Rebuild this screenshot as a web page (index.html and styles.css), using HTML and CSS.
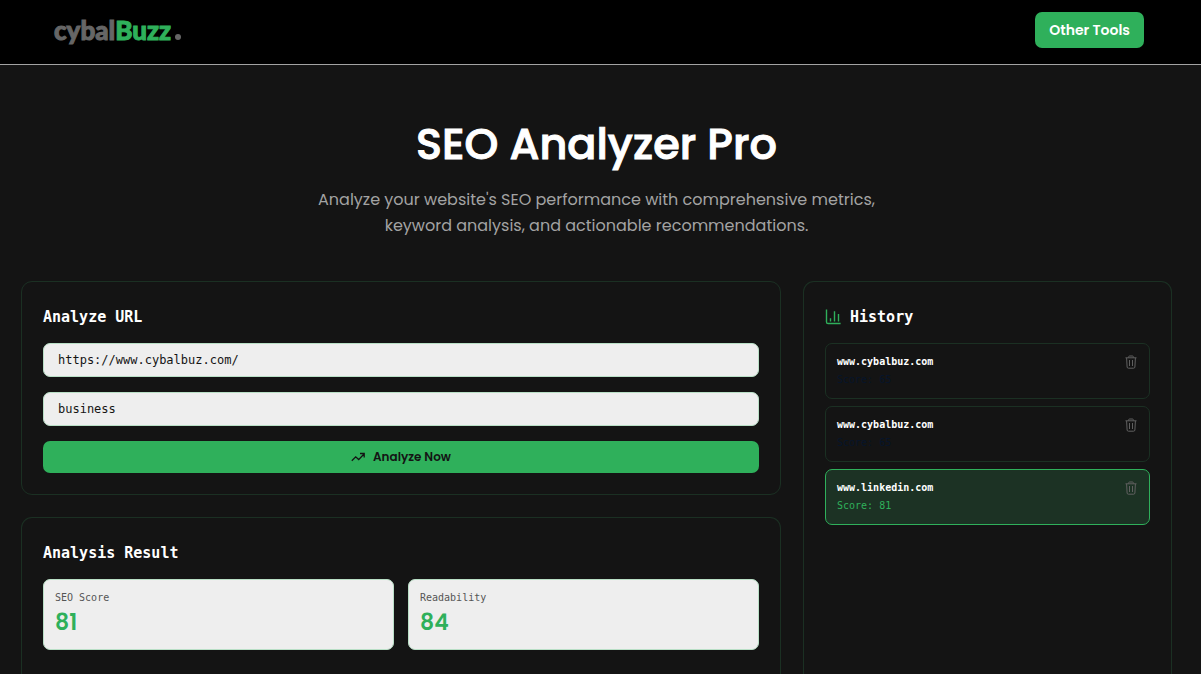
FILE: index.html
```html
<!DOCTYPE html>
<html lang="en">
<head>
<meta charset="utf-8">
<meta name="viewport" content="width=device-width, initial-scale=1">
<title>SEO Analyzer Pro</title>
<link rel="stylesheet" href="styles.css">
</head>
<body>
<svg class="sprite" aria-hidden="true">
  <symbol id="trash" viewBox="0 0 12 14"><path d="M.5 2.8h11M3.7 2.6V1.8q0-.8.8-.8h3q.8 0 .8.8v.8M1.6 3l.5 9q.1 1.2 1.3 1.2h5.2q1.2 0 1.3-1.2l.5-9M4.5 5v6M7.5 5v6"/></symbol>
</svg>
<header class="topbar">
  <a class="logo" href="#"><span class="logo-main">cybal</span><span class="logo-accent">Buzz</span><span class="logo-dot"></span></a>
  <button class="btn btn-tools" type="button">Other Tools</button>
</header>
<main class="page">
  <section class="hero">
    <h1 class="hero-title">SEO Analyzer Pro</h1>
    <p class="hero-text">Analyze your website's SEO performance with comprehensive metrics, keyword analysis, and actionable recommendations.</p>
  </section>
  <div class="layout">
    <div class="content">
      <section class="card">
        <h2 class="card-title">Analyze URL</h2>
        <form class="form">
          <input class="field" type="text" aria-label="Website URL" value="https://www.cybalbuz.com/">
          <input class="field" type="text" aria-label="Keyword" value="business">
          <button class="btn btn-analyze" type="button">
            <svg class="trend" viewBox="0 0 14 10" aria-hidden="true"><path d="M.8 8.7 4.7 4.8l3 2.8L13 2M9 1.5h4.2v4"/></svg>
            Analyze Now
          </button>
        </form>
      </section>
      <section class="card card-open">
        <h2 class="card-title">Analysis Result</h2>
        <div class="stats">
          <div class="stat"><span class="stat-label">SEO Score</span><strong class="stat-value">81</strong></div>
          <div class="stat"><span class="stat-label">Readability</span><strong class="stat-value">84</strong></div>
        </div>
      </section>
    </div>
    <aside class="card card-open">
      <h2 class="card-title">
        <svg class="chart" viewBox="0 0 16 16" aria-hidden="true"><path d="M1.5 .5v12.4q0 1.6 1.6 1.6h12.5M5.5 9.2v3.3M9.5 2.2v10.3M13.5 5v7.5"/></svg>
        History
      </h2>
      <ul class="history">
        <li class="entry"><div><p class="entry-site">www.cybalbuz.com</p><p class="entry-score">Score: 65</p></div><button class="remove" type="button" aria-label="Remove"><svg class="trash" aria-hidden="true"><use href="#trash"/></svg></button></li>
        <li class="entry"><div><p class="entry-site">www.cybalbuz.com</p><p class="entry-score">Score: 65</p></div><button class="remove" type="button" aria-label="Remove"><svg class="trash" aria-hidden="true"><use href="#trash"/></svg></button></li>
        <li class="entry entry-active"><div><p class="entry-site">www.linkedin.com</p><p class="entry-score">Score: 81</p></div><button class="remove" type="button" aria-label="Remove"><svg class="trash" aria-hidden="true"><use href="#trash"/></svg></button></li>
      </ul>
    </aside>
  </div>
</main>
</body>
</html>
```
FILE: styles.css
```css
:root {
  --green: #2fb05b;
  --line: #1b3023;
  --sans: Poppins, Inter, sans-serif;
  --mono: "DejaVu Sans Mono", monospace;
}
* { box-sizing: border-box; }
body {
  margin: 0;
  min-height: 100vh;
  display: flex;
  flex-direction: column;
  background: #141414;
  color: #fff;
  font-family: var(--mono);
}
h1, h2, p, ul { margin: 0; padding: 0; }
svg { fill: none; stroke: currentColor; flex: none; }
.sprite { position: absolute; width: 0; height: 0; }
.topbar {
  display: flex;
  align-items: flex-start;
  justify-content: space-between;
  height: 65px;
  padding: 12px 57px 0 54px;
  background: #000;
  border-bottom: 1px solid #a3a3a3;
}
.logo {
  display: flex;
  align-items: baseline;
  font: 900 26px/36px Lato, sans-serif;
  color: #666;
  text-decoration: none;
  -webkit-text-stroke: 1px currentColor;
}
.logo-accent { color: var(--green); }
.logo-dot { width: 6px; height: 6px; margin-left: 4px; border-radius: 50%; background: #666; }
.btn {
  border: 0;
  border-radius: 7px;
  background: var(--green);
  font-family: var(--sans);
}
.btn-tools { height: 36px; padding: 0 14px; color: #fff; font-size: 14px; font-weight: 600; }
.page { flex: 1; display: flex; flex-direction: column; padding: 0 29px 0 21px; }
.hero { padding: 50px 0 42px; text-align: center; }
.hero-title {
  margin-bottom: 14px;
  font: 500 43px/58px var(--sans);
  -webkit-text-stroke: 1px currentColor;
}
.hero-text {
  max-width: 600px;
  margin: 0 auto;
  color: #a3a3a3;
  font: 400 16px/26px var(--sans);
}
.layout { flex: 1; display: grid; grid-template-columns: repeat(3, 1fr); gap: 22px; }
.content { grid-column: span 2; display: flex; flex-direction: column; gap: 22px; }
.card { padding: 21px; border: 1px solid var(--line); border-radius: 11px; }
.card-open { flex: 1; border-bottom: 0; border-radius: 11px 11px 0 0; }
.card-title {
  display: flex;
  align-items: center;
  gap: 9px;
  margin-bottom: 12px;
  font-size: 15px;
  line-height: 28px;
}
.form { display: flex; flex-direction: column; gap: 15px; }
.field {
  height: 34px;
  padding: 0 14px;
  border: 1px solid #b9dfc6;
  border-radius: 7px;
  background: #eee;
  color: #141414;
  font: 12px var(--mono);
}
.btn-analyze {
  display: flex;
  align-items: center;
  justify-content: center;
  gap: 8px;
  height: 32px;
  color: #141414;
  font-size: 12px;
  font-weight: 600;
}
.trend { width: 14px; height: 10px; stroke-width: 1.3; }
.stats { display: grid; grid-template-columns: 1fr 1fr; gap: 14px; }
.stat {
  display: flex;
  flex-direction: column;
  padding: 10px 11px 9px;
  border: 1px solid #b9dfc6;
  border-radius: 7px;
  background: #eee;
}
.stat-label { color: #555; font-size: 10px; line-height: 16px; }
.stat-value { color: var(--green); font: 600 22px/34px var(--sans); }
.chart { width: 16px; height: 16px; color: var(--green); stroke-width: 1.4; }
.history { display: flex; flex-direction: column; gap: 7px; list-style: none; }
.entry {
  display: flex;
  justify-content: space-between;
  align-items: flex-start;
  min-height: 56px;
  padding: 9px 11px;
  border: 1px solid var(--line);
  border-radius: 7px;
  font-size: 10px;
  line-height: 18px;
}
.entry-site { font-weight: 700; }
.entry-score { color: #06142b; }
.entry-active { border-color: var(--green); background: #1c3224; }
.entry-active .entry-score { color: var(--green); }
.remove { display: flex; padding: 2px 1px; border: 0; background: none; color: #606060; }
.trash { width: 12px; height: 14px; }
```
